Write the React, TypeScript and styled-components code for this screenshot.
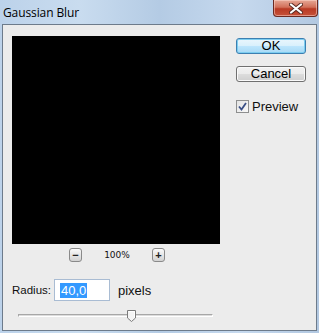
import React from 'react'
import styled, { createGlobalStyle } from 'styled-components'

const Global = createGlobalStyle`
  html, body { margin: 0; padding: 0; }
  body { width: 319px; height: 333px; overflow: hidden; background: #b9cde3; }
`

export default function App() {
  return (
    <>
      <Global />
      <Window>
        <TitleBar>
          <Title>Gaussian Blur</Title>
          <CloseButton>
            <svg width="14" height="11" viewBox="0 0 14 11">
              <path d="M2 1.5 L12 9.5 M12 1.5 L2 9.5" stroke="#5a2a22" strokeWidth="4" strokeLinecap="round" />
              <path d="M2 1.5 L12 9.5 M12 1.5 L2 9.5" stroke="#ffffff" strokeWidth="2.2" strokeLinecap="round" />
            </svg>
          </CloseButton>
        </TitleBar>
        <Panel>
          <LeftColumn>
            <PreviewBox />
            <ZoomRow>
              <ZoomButton>−</ZoomButton>
              <ZoomLabel>100%</ZoomLabel>
              <ZoomButton>+</ZoomButton>
            </ZoomRow>
            <RadiusRow>
              <FieldLabel>Radius:</FieldLabel>
              <Input><Selected>40,0</Selected></Input>
              <Unit>pixels</Unit>
            </RadiusRow>
            <Slider>
              <Track />
              <Thumb style={{ left: '109px' }}>
                <svg width="9" height="12" viewBox="0 0 9 12">
                  <path d="M0.5 0.5 H8.5 V8 L4.5 11.5 L0.5 8 Z" fill="#f4f4f4" stroke="#7b7b7b" />
                  <path d="M1.5 1.5 H7.5 V7.5" fill="none" stroke="#ffffff" />
                </svg>
              </Thumb>
            </Slider>
          </LeftColumn>
          <RightColumn>
            <Button $primary>OK</Button>
            <Button>Cancel</Button>
            <CheckRow>
              <CheckBox>
                <svg width="9" height="9" viewBox="0 0 9 9">
                  <path d="M1 4.5 L3.5 7.5 L8 1" fill="none" stroke="#3a4f86" strokeWidth="1.8" />
                </svg>
              </CheckBox>
              <CheckLabel>Preview</CheckLabel>
            </CheckRow>
          </RightColumn>
        </Panel>
      </Window>
    </>
  )
}

const Window = styled.div`
  width: 319px;
  height: 333px;
  display: flex;
  flex-direction: column;
  background: linear-gradient(90deg, #bcd2ea 0%, #c9dcef 25%, #b4cbe4 50%, #c6d9ee 75%, #b2c8e1 100%);
  font-family: "Liberation Sans", Arial, sans-serif;
`

const TitleBar = styled.div`
  height: 24px;
  display: flex;
  align-items: flex-start;
  justify-content: space-between;
`

const Title = styled.div`
  font-family: "Open Sans", "Noto Sans", sans-serif;
  font-size: 12px;
  color: #000;
  padding: 4px 0 0 3px;
  letter-spacing: -0.1px;
`

const CloseButton = styled.div`
  width: 45px;
  height: 17px;
  margin-right: 1px;
  box-sizing: border-box;
  border: 1px solid #6b2a22;
  border-top: none;
  border-radius: 0 0 4px 4px;
  background: linear-gradient(180deg, #e6a896 0%, #d2705a 45%, #b93a24 55%, #c6523a 100%);
  display: flex;
  align-items: center;
  justify-content: center;
  box-shadow: inset 0 0 0 1px rgba(255, 220, 210, 0.5);
`

const Panel = styled.div`
  flex: 1;
  margin: 0 2px 2px 2px;
  border: 1px solid #6d7b8b;
  background: #ececec;
  display: flex;
  padding: 11px 0 0 9px;
  box-sizing: border-box;
`

const LeftColumn = styled.div`
  width: 208px;
  display: flex;
  flex-direction: column;
`

const PreviewBox = styled.div`
  width: 208px;
  height: 208px;
  background: #000;
`

const ZoomRow = styled.div`
  display: flex;
  align-items: center;
  justify-content: center;
  gap: 20px;
  margin-top: 4px;
  padding-left: 2px;
`

const ZoomButton = styled.div`
  width: 13px;
  height: 14px;
  box-sizing: border-box;
  border: 1px solid #8a8a8a;
  border-radius: 3px;
  background: linear-gradient(180deg, #fbfbfb 0%, #e6e6e6 50%, #d2d2d2 100%);
  font-size: 11px;
  line-height: 11px;
  font-weight: bold;
  color: #222;
  display: flex;
  align-items: center;
  justify-content: center;
`

const ZoomLabel = styled.div`
  font-family: "DejaVu Sans", sans-serif;
  font-size: 9px;
  color: #111;
  width: 30px;
  text-align: center;
`

const RadiusRow = styled.div`
  display: flex;
  align-items: center;
  margin-top: 17px;
  height: 22px;
`

const FieldLabel = styled.div`
  width: 42px;
  font-size: 11.5px;
  color: #101010;
  white-space: nowrap;
`

const Input = styled.div`
  width: 56px;
  height: 22px;
  box-sizing: border-box;
  border: 1px solid #a9bcd3;
  background: #fff;
  padding: 3px 0 0 5px;
  font-size: 13px;
  line-height: 15px;
`

const Selected = styled.span`
  background: #3399ff;
  color: #fff;
  padding: 0 1px;
`

const Unit = styled.div`
  font-size: 13px;
  color: #101010;
  margin-left: 8px;
`

const Slider = styled.div`
  position: relative;
  height: 14px;
  margin-top: 9px;
  margin-left: 6px;
  width: 195px;
`

const Track = styled.div`
  position: absolute;
  left: 0;
  right: 0;
  top: 4px;
  height: 3px;
  box-sizing: border-box;
  border: 1px solid #a7a7a7;
  border-bottom-color: #ffffff;
  border-right-color: #ffffff;
  background: #dcdcdc;
`

const Thumb = styled.div`
  position: absolute;
  top: 0;
  width: 9px;
  height: 12px;
  display: flex;
`

const RightColumn = styled.div`
  display: flex;
  flex-direction: column;
  margin-left: 16px;
  padding-top: 2px;
`

const Button = styled.div<{ $primary?: boolean }>`
  width: 70px;
  height: 16px;
  box-sizing: border-box;
  border: 1px solid ${p => (p.$primary ? '#3c7fb1' : '#707070')};
  border-radius: 3px;
  background: ${p =>
    p.$primary
      ? 'linear-gradient(180deg, #eaf6fd 0%, #d9f0fc 50%, #bee6fd 50%, #a7d9f5 100%)'
      : 'linear-gradient(180deg, #f2f2f2 0%, #ebebeb 50%, #dddddd 50%, #cfcfcf 100%)'};
  box-shadow: ${p => (p.$primary ? 'inset 0 0 0 1px #7ccdf0' : 'inset 0 0 0 1px #fafafa')};
  font-size: 13px;
  line-height: 14px;
  color: #000;
  text-align: center;
  margin-bottom: 12px;
`

const CheckRow = styled.div`
  display: flex;
  align-items: center;
  margin-top: 5px;
  gap: 3px;
`

const CheckBox = styled.div`
  width: 13px;
  height: 13px;
  box-sizing: border-box;
  border: 1px solid #8e8f8f;
  background: linear-gradient(135deg, #e4e4e4 0%, #f8f8f8 100%);
  display: flex;
  align-items: center;
  justify-content: center;
`

const CheckLabel = styled.div`
  font-size: 13px;
  color: #101010;
`
